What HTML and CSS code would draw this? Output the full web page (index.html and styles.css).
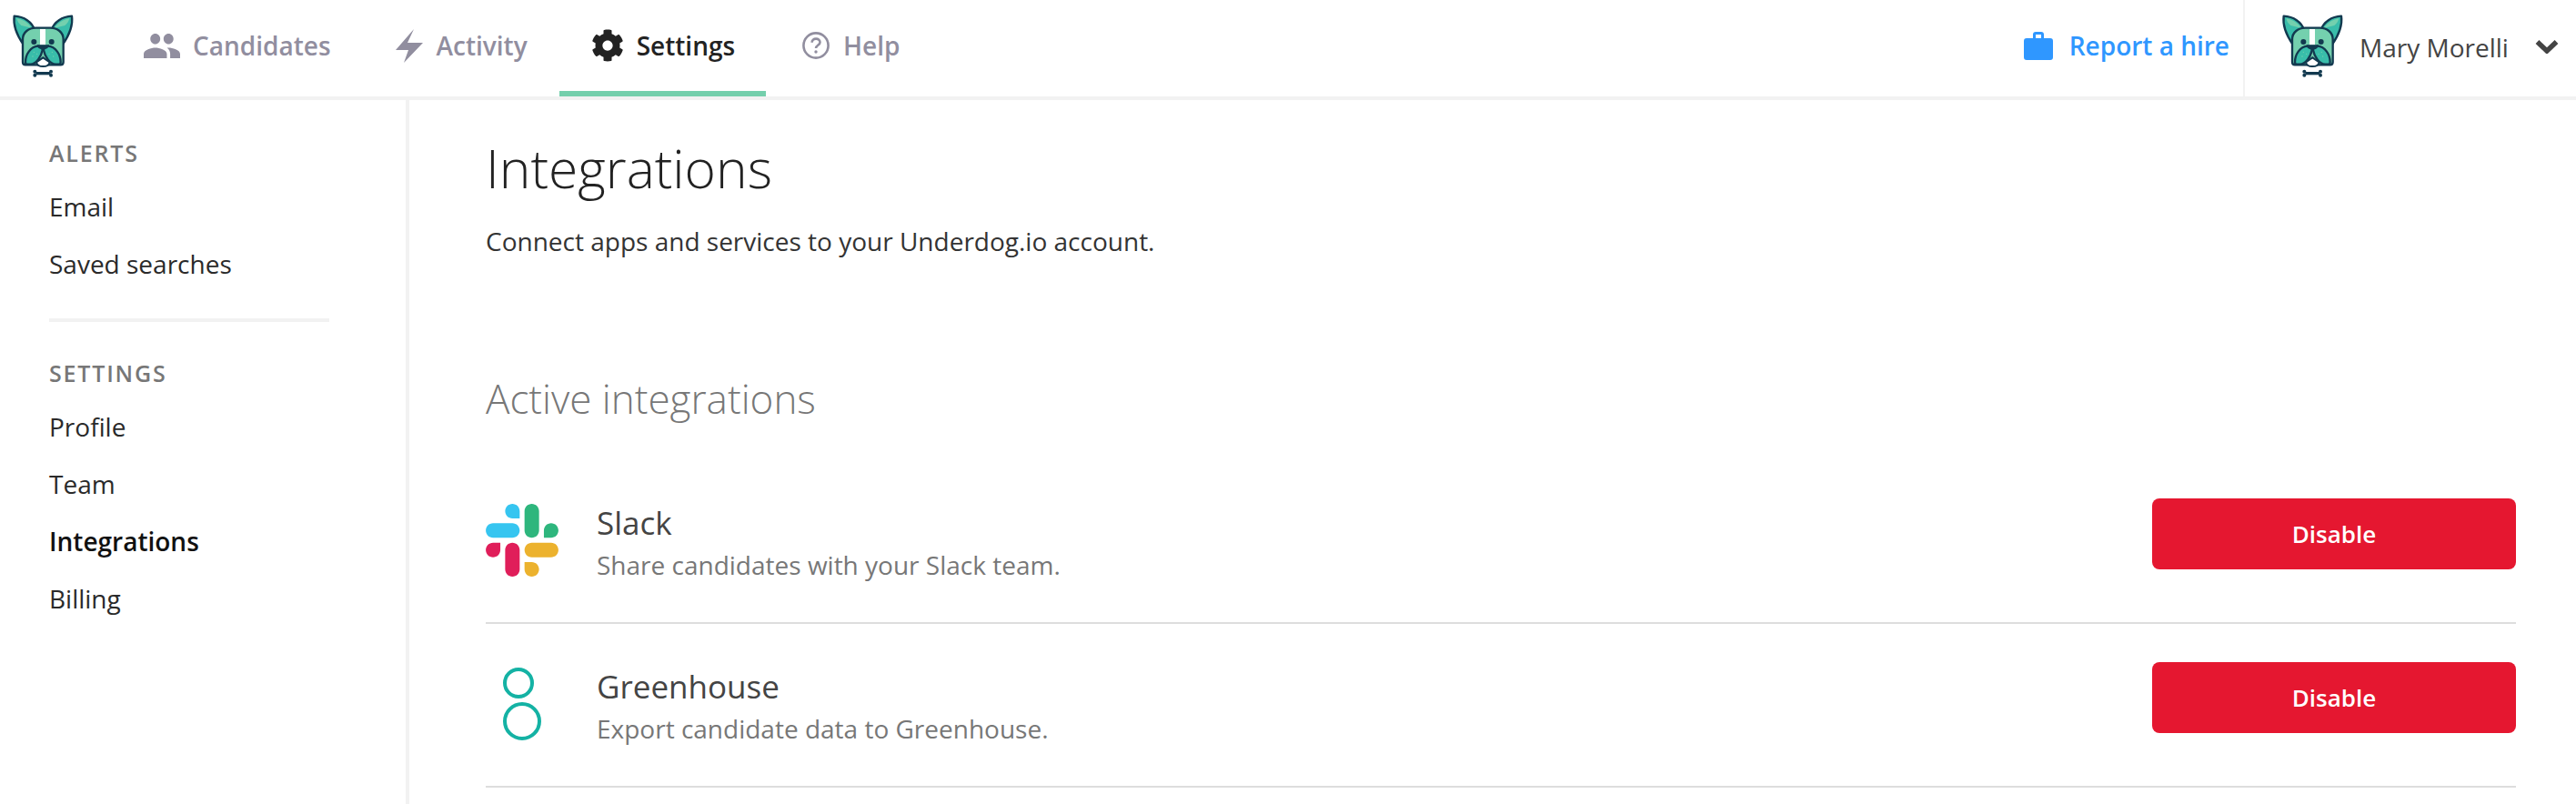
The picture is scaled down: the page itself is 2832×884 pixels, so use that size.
FILE: index.html
```html
<!DOCTYPE html>
<html lang="en">
<head>
<meta charset="utf-8">
<title>Integrations</title>
<link rel="stylesheet" href="styles.css">
</head>
<body>
<svg class="defs" width="0" height="0" aria-hidden="true">
  <symbol id="dog" viewBox="0 0 300 300">
    <path d="M47 53C80 55 105 72 114 98L78 148C58 120 42 90 47 53Z" fill="#39bdaa" stroke="#12394f" stroke-width="7" stroke-linejoin="round"/>
    <path d="M55 60C78 66 94 76 104 92L70 84C62 78 57 70 55 60Z" fill="#74d0ae"/>
    <path d="M237 53C204 55 179 72 170 98L206 148C226 120 242 90 237 53Z" fill="#39bdaa" stroke="#12394f" stroke-width="7" stroke-linejoin="round"/>
    <path d="M229 60C206 66 190 76 180 92L214 84C222 78 227 70 229 60Z" fill="#74d0ae"/>
    <path d="M75 130C75 106 95 92 118 92H166C189 92 209 106 209 130V205C209 210 205 214 200 214H84C79 214 75 210 75 205Z" fill="#74d0ae" stroke="#12394f" stroke-width="7"/>
    <rect x="132" y="96" width="18" height="52" fill="#fff"/>
    <path d="M120 205C124 224 160 224 164 205L142 190Z" fill="#fff" stroke="#12394f" stroke-width="6"/>
    <path d="M84 205C84 180 100 154 126 152C134 152 140 158 140 166C136 186 120 212 100 212H90C86 212 84 210 84 205Z" fill="#39bdaa" stroke="#12394f" stroke-width="7"/>
    <path d="M200 205C200 180 184 154 158 152C150 152 144 158 144 166C148 186 164 212 184 212H194C198 212 200 210 200 205Z" fill="#39bdaa" stroke="#12394f" stroke-width="7"/>
    <path d="M122 148H162C164 156 152 164 142 164C132 164 120 156 122 148Z" fill="#12394f"/>
    <circle cx="112" cy="138" r="9" fill="#12394f"/>
    <circle cx="170" cy="138" r="9" fill="#12394f"/>
    <g fill="#74d0ae">
      <circle cx="112" cy="172" r="2"/><circle cx="122" cy="178" r="2"/><circle cx="108" cy="186" r="2"/>
      <circle cx="172" cy="172" r="2"/><circle cx="162" cy="178" r="2"/><circle cx="176" cy="186" r="2"/>
    </g>
    <g fill="#12394f">
      <rect x="118" y="237" width="48" height="10"/>
      <circle cx="115" cy="236" r="6"/><circle cx="115" cy="248" r="6"/>
      <circle cx="168" cy="236" r="6"/><circle cx="168" cy="248" r="6"/>
    </g>
  </symbol>
</svg>

<header class="topbar">
  <a class="logo" href="#"><svg class="dog"><use href="#dog"/></svg></a>
  <nav class="tabs">
    <a class="tab" href="#">
      <svg class="ico ico-users" viewBox="1 5 22 14" preserveAspectRatio="none"><path d="M16 11c1.66 0 2.99-1.34 2.99-3S17.66 5 16 5c-1.66 0-3 1.34-3 3s1.34 3 3 3zm-8 0c1.66 0 2.99-1.34 2.99-3S9.66 5 8 5C6.34 5 5 6.34 5 8s1.34 3 3 3zm0 2c-2.33 0-7 1.17-7 3.5V19h14v-2.5c0-2.33-4.67-3.5-7-3.5zm8 0c-.29 0-.62.02-.97.05 1.16.84 1.97 1.97 1.97 3.45V19h6v-2.5c0-2.33-4.67-3.5-7-3.5z"/></svg>
      Candidates
    </a>
    <a class="tab" href="#">
      <svg class="ico ico-bolt" viewBox="0 0 30 37"><path d="M20 0L13 15H30L9 37L14 23H0Z"/></svg>
      Activity
    </a>
    <a class="tab tab-active" href="#">
      <svg class="ico ico-gear" viewBox="0 0 512 512"><path d="M487.4 315.7l-42.6-24.6c4.3-23.2 4.3-47 0-70.2l42.6-24.6c4.9-2.8 7.1-8.6 5.5-14-11.1-35.6-30-67.8-54.7-94.6-3.8-4.1-10-5.1-14.8-2.3L380.8 110c-17.9-15.4-38.5-27.3-60.8-35.1V25.8c0-5.6-3.9-10.5-9.4-11.7-36.7-8.2-74.3-7.8-109.2 0-5.5 1.2-9.4 6.1-9.4 11.7V75c-22.2 7.9-42.8 19.8-60.8 35.1L88.7 85.5c-4.9-2.8-11-1.9-14.8 2.3-24.7 26.7-43.6 58.9-54.7 94.6-1.7 5.4.6 11.2 5.5 14L67.3 221c-4.3 23.2-4.3 47 0 70.2l-42.6 24.6c-4.9 2.8-7.1 8.6-5.5 14 11.1 35.6 30 67.8 54.7 94.6 3.8 4.1 10 5.1 14.8 2.3l42.6-24.6c17.9 15.4 38.5 27.3 60.8 35.1v49.2c0 5.6 3.9 10.5 9.4 11.7 36.7 8.2 74.3 7.8 109.2 0 5.5-1.2 9.4-6.1 9.4-11.7v-49.2c22.2-7.9 42.8-19.8 60.8-35.1l42.6 24.6c4.9 2.8 11 1.9 14.8-2.3 24.7-26.7 43.6-58.9 54.7-94.6 1.5-5.5-.7-11.3-5.6-14.1zM256 336c-44.1 0-80-35.9-80-80s35.9-80 80-80 80 35.9 80 80-35.9 80-80 80z"/></svg>
      Settings
    </a>
    <a class="tab tab-help" href="#">
      <svg class="ico ico-help" viewBox="0 0 30 30"><circle cx="15" cy="15" r="13.6" fill="none" stroke-width="2.6"/><path d="M10.6 11.8c0-2.6 2-4.2 4.5-4.2s4.4 1.5 4.4 3.8c0 3.4-4.5 3.3-4.5 6.6" fill="none" stroke-width="2.6"/><circle cx="15" cy="22" r="1.7" class="help-dot"/></svg>
      Help
    </a>
  </nav>
  <a class="report" href="#">
    <svg class="ico-case" viewBox="0 0 32 31"><path d="M10 7V3a3 3 0 0 1 3-3h6a3 3 0 0 1 3 3v4h7a3 3 0 0 1 3 3v18a3 3 0 0 1-3 3H3a3 3 0 0 1-3-3V10a3 3 0 0 1 3-3ZM13 7h6V3h-6Z" fill-rule="evenodd"/></svg>
    Report a hire
  </a>
  <div class="user">
    <svg class="dog"><use href="#dog"/></svg>
    <span class="user-name">Mary Morelli</span>
    <svg class="ico-chev" viewBox="0 0 26 16"><path d="M2.5 3L13 13L23.5 3" fill="none" stroke-width="5.5"/></svg>
  </div>
</header>

<div class="layout">
  <aside class="sidebar">
    <h4 class="side-label">ALERTS</h4>
    <a class="side-link" href="#">Email</a>
    <a class="side-link" href="#">Saved searches</a>
    <hr class="side-rule">
    <h4 class="side-label">SETTINGS</h4>
    <a class="side-link" href="#">Profile</a>
    <a class="side-link" href="#">Team</a>
    <a class="side-link side-current" href="#">Integrations</a>
    <a class="side-link" href="#">Billing</a>
  </aside>
  <main class="content">
    <h1 class="page-title">Integrations</h1>
    <p class="page-desc">Connect apps and services to your Underdog.io account.</p>
    <h2 class="section-title">Active integrations</h2>
    <section class="row">
      <svg class="row-icon" viewBox="0 0 2447.6 2452.5">
        <path fill="#36c5f0" fill-rule="evenodd" d="M897.4 0c-135.3.1-244.8 109.9-244.7 245.2-.1 135.3 109.5 245.1 244.8 245.2h244.8V245.3c.1-135.3-109.5-245.1-244.9-245.3.1 0 .1 0 0 0m0 654H244.8C109.5 654.1-.1 763.9 0 899.2c-.2 135.3 109.4 245.1 244.7 245.3h652.7c135.3-.1 244.9-109.9 244.8-245.2.1-135.4-109.5-245.2-244.8-245.3z"/>
        <path fill="#2eb67d" fill-rule="evenodd" d="M2447.6 899.2c.1-135.3-109.5-245.1-244.8-245.2-135.3.1-244.9 109.9-244.8 245.2v245.3h244.8c135.3-.1 244.9-109.9 244.8-245.3zm-652.7 0V245.2c.1-135.2-109.4-245-244.7-245.2-135.3.1-244.9 109.9-244.8 245.2v654c-.2 135.3 109.4 245.1 244.7 245.3 135.3-.1 244.9-109.9 244.8-245.3z"/>
        <path fill="#ecb22e" fill-rule="evenodd" d="M1550.1 2452.5c135.3-.1 244.9-109.9 244.8-245.2.1-135.3-109.5-245.1-244.8-245.2h-244.8v245.2c-.1 135.2 109.5 245 244.8 245.2zm0-654.1h652.7c135.3-.1 244.9-109.9 244.8-245.2.2-135.3-109.4-245.1-244.7-245.3h-652.7c-135.3.1-244.9 109.9-244.8 245.2-.1 135.4 109.4 245.2 244.7 245.3z"/>
        <path fill="#e01e5a" fill-rule="evenodd" d="M0 1553.2c-.1 135.3 109.5 245.1 244.8 245.2 135.3-.1 244.9-109.9 244.8-245.2v-245.2H244.8c-135.3.1-244.9 109.9-244.8 245.2zm652.7 0v654c-.2 135.3 109.4 245.1 244.7 245.3 135.3-.1 244.9-109.9 244.8-245.2v-653.9c.2-135.3-109.4-245.1-244.7-245.3-135.4 0-244.9 109.8-244.8 245.1 0 0 0 0 0 0z"/>
      </svg>
      <div class="row-text">
        <div class="row-name">Slack</div>
        <div class="row-desc">Share candidates with your Slack team.</div>
      </div>
      <button class="btn-disable" type="button">Disable</button>
    </section>
    <section class="row">
      <svg class="row-icon" viewBox="0 0 80 80">
        <circle cx="36" cy="17" r="15" fill="none" stroke="#14b2a4" stroke-width="4"/>
        <circle cx="40" cy="59" r="19" fill="none" stroke="#14b2a4" stroke-width="4"/>
      </svg>
      <div class="row-text">
        <div class="row-name">Greenhouse</div>
        <div class="row-desc">Export candidate data to Greenhouse.</div>
      </div>
      <button class="btn-disable" type="button">Disable</button>
    </section>
  </main>
</div>
</body>
</html>
```

FILE: styles.css
```css
* { box-sizing: border-box; }
html, body { margin: 0; height: 100%; }
body {
  background: #fff;
  color: #222;
  font-family: "Open Sans", "Liberation Sans", sans-serif;
  font-size: 28px;
  overflow: hidden;
}
a { color: inherit; text-decoration: none; }
.defs { position: absolute; }

/* top bar */
.topbar {
  display: flex;
  align-items: stretch;
  height: 110px;
  border-bottom: 4px solid #f2f2f2;
}
.logo { display: flex; width: 100px; height: 100px; flex: none; }
.dog { display: block; width: 100px; height: 100px; flex: none; }
.tabs { display: flex; margin-left: 23px; }
.tab {
  display: flex;
  align-items: center;
  gap: 14px;
  padding: 0 35px 0 35px;
  height: 106px;
  border-bottom: 6px solid transparent;
  color: #918e9f;
  font-weight: 600;
  font-size: 28px;
  white-space: nowrap;
}
.tab + .tab { padding-left: 36px; }
.tab-active { color: #222; border-bottom-color: #74cfac; padding-left: 35px !important; padding-right: 34px; }
.tab-help { padding-left: 40px !important; gap: 15px; }
.ico { display: block; flex: none; fill: #918e9f; stroke: none; }
.ico-users { width: 40px; height: 27px; }
.ico-bolt { width: 30px; height: 37px; margin-right: 1px; }
.ico-gear { width: 36px; height: 36px; fill: #222; }
.ico-help { width: 30px; height: 30px; fill: none; stroke: #918e9f; }
.help-dot { fill: #918e9f; stroke: none; }

.report {
  margin-left: auto;
  display: flex;
  align-items: center;
  gap: 18px;
  padding: 0 15px 6px 0;
  color: #2f97ff;
  font-weight: 600;
  white-space: nowrap;
}
.ico-case { display: block; width: 32px; height: 31px; fill: #2f97ff; flex: none; }
.user {
  display: flex;
  align-items: flex-start;
  width: 366px;
  padding-left: 27px;
  border-left: 2px solid #f2f2f2;
  color: #444;
}
.user-name { margin-left: -1px; line-height: 104px; white-space: nowrap; }
.ico-chev { display: block; width: 26px; height: 16px; margin: 43px 0 0 29px; stroke: #444; flex: none; }

/* layout */
.layout { display: flex; height: 774px; }
.sidebar {
  width: 450px;
  flex: none;
  padding: 32px 0 0 54px;
  border-right: 4px solid #f2f2f2;
}
.side-label {
  margin: 0;
  height: 54px;
  line-height: 52px;
  font-size: 25px;
  font-weight: 600;
  letter-spacing: 1.8px;
  color: #777;
}
.side-link { display: block; height: 63px; line-height: 62px; color: #2a2a2a; }
.side-current { color: #111; font-weight: 600; line-height: 63px; }
.side-rule {
  width: 308px;
  height: 4px;
  margin: 28px 0 30px;
  border: 0;
  background: #f2f2f2;
}

.content { flex: 1; padding: 0 66px 0 84px; min-width: 0; }
.page-title {
  margin: 36px 0 0;
  height: 76px;
  font-size: 58.7px;
  font-weight: 300;
  line-height: 76px;
  color: #222;
}
.page-desc { margin: 24px 0 0; line-height: 38px; color: #333; }
.section-title {
  margin: 0;
  padding-top: 124px;
  height: 222px;
  font-size: 44px;
  font-weight: 300;
  line-height: 60px;
  color: #777;
}
.row {
  display: flex;
  align-items: flex-start;
  height: 180px;
  padding-top: 42px;
  border-bottom: 2px solid #ddd;
}
.row-icon { display: block; width: 80px; height: 80px; margin-top: 6px; flex: none; }
.row-text { margin-left: 42px; flex: 1; padding-top: 4px; }
.row-name { font-size: 35px; line-height: 46px; color: #444; }
.row-desc { font-size: 28px; line-height: 46px; color: #777; }
.btn-disable {
  width: 400px;
  height: 78px;
  flex: none;
  border: 0;
  border-radius: 8px;
  background: #e51730;
  color: #fff;
  font-family: inherit;
  font-size: 26px;
  font-weight: 600;
}
```
